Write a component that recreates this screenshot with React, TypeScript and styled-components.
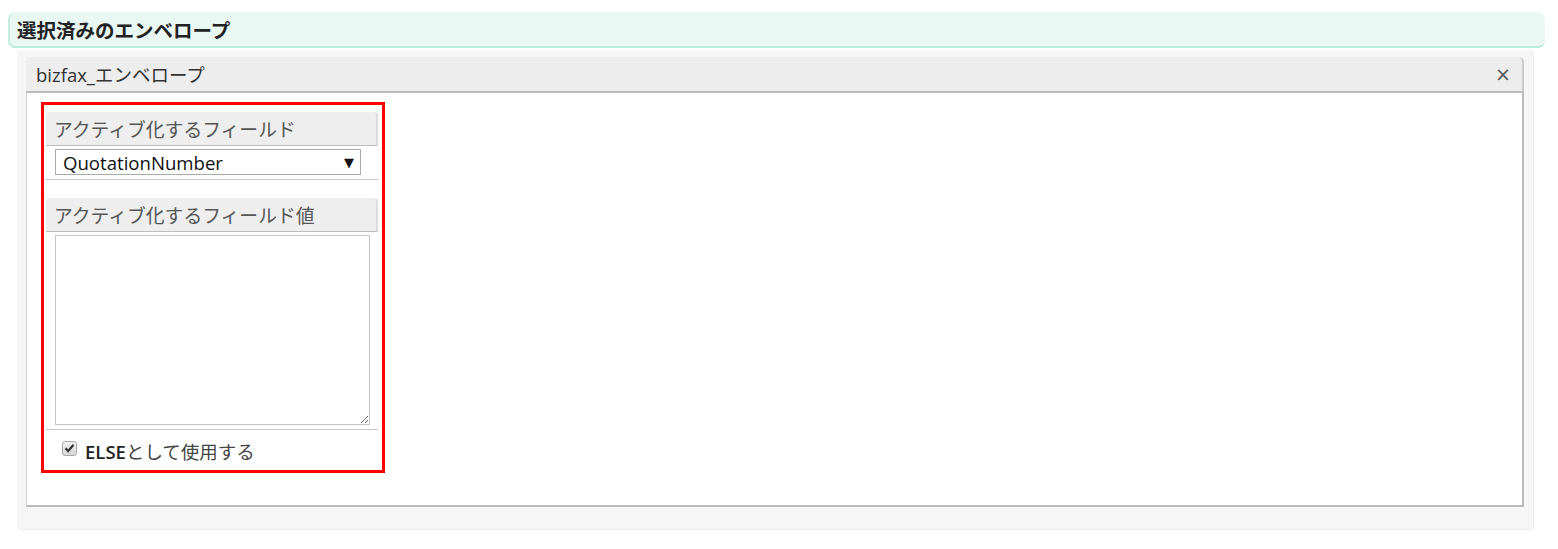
import styled, { createGlobalStyle } from 'styled-components';

const GlobalStyle = createGlobalStyle`
  html, body {
    margin: 0;
    padding: 0;
    background: #fff;
  }
  body {
    font-family: "Open Sans", "Noto Sans CJK JP", sans-serif;
    color: #333;
  }
`;

const Page = styled.div`
  width: 1558px;
  height: 549px;
  padding-top: 12px;
  box-sizing: border-box;
`;

const SectionHeader = styled.div`
  margin: 0 13px 0 8px;
  height: 36px;
  box-sizing: border-box;
  background: #e9f8f3;
  border-left: 2px solid #c4efdf;
  border-bottom: 2px solid #b9ecd9;
  border-radius: 7px;
  display: flex;
  align-items: center;
  padding-left: 7px;
  font-family: "Noto Sans CJK JP", sans-serif;
  font-weight: 700;
  font-size: 19.5px;
  color: #222;
`;

const OuterPanel = styled.div`
  margin: 2px 24px 0 17px;
  height: 480px;
  box-sizing: border-box;
  background: #f6f6f6;
  border-right: 1px solid #ececec;
  border-bottom: 1px solid #ececec;
  border-radius: 0 4px 4px 4px;
  padding: 7px 9px 0 9px;
`;

const Window = styled.div`
  display: flex;
  flex-direction: column;
  height: 450px;
`;

const TitleBar = styled.div`
  height: 36px;
  box-sizing: border-box;
  background: #ededed;
  border-right: 2px solid #c9c9c9;
  border-bottom: 2px solid #bbbbbb;
  border-radius: 4px 5px 0 0;
  display: flex;
  align-items: center;
  justify-content: space-between;
  padding: 0 10px 0 10px;
  font-family: "Open Sans", "Noto Sans CJK JP", sans-serif;
  font-size: 18.5px;
  color: #333;
`;

const CloseButton = styled.span`
  font-family: "DejaVu Sans", sans-serif;
  font-size: 19px;
  color: #555;
  line-height: 1;
  margin-right: 1px;
`;

const WindowBody = styled.div`
  flex: 1;
  background: #fff;
  border-left: 1px solid #cfcfcf;
  border-right: 2px solid #bbbbbb;
  border-bottom: 2px solid #bbbbbb;
  padding: 9px 0 0 14px;
`;

const Highlight = styled.div`
  width: 344px;
  height: 371px;
  box-sizing: border-box;
  border: 3px solid #ff0000;
  padding: 7px 4px 0 2px;
  display: flex;
  flex-direction: column;
`;

const FieldLabel = styled.div`
  height: 34px;
  box-sizing: border-box;
  background: #eeeeee;
  border-right: 2px solid #dddddd;
  border-bottom: 1px solid #bdbdbd;
  border-radius: 3px 4px 0 0;
  display: flex;
  align-items: center;
  padding-left: 8px;
  font-family: "Noto Sans CJK JP", sans-serif;
  font-size: 18.8px;
  color: #555;
`;

const FieldRow = styled.div<{ $last?: boolean }>`
  padding: 3px 0 4px 9px;
  border-bottom: ${({ $last }) => ($last ? 'none' : '1px solid #c8c8c8')};
`;

const Select = styled.div`
  width: 306px;
  height: 26px;
  box-sizing: border-box;
  border: 1px solid #aaaaaa;
  display: flex;
  align-items: center;
  justify-content: space-between;
  padding: 0 6px 0 7px;
  font-family: "Open Sans", sans-serif;
  font-size: 18.6px;
  color: #111;
`;

const Arrow = styled.span`
  font-family: "DejaVu Sans", sans-serif;
  font-size: 13px;
  color: #111;
`;

const Spacer = styled.div`
  height: 18px;
`;

const TextArea = styled.textarea`
  display: block;
  width: 315px;
  height: 190px;
  box-sizing: border-box;
  border: 1px solid #c4c4c4;
  margin: 0;
  resize: both;
  font-family: "Open Sans", sans-serif;
`;

const CheckRow = styled.label`
  display: flex;
  align-items: center;
  gap: 8px;
  padding: 8px 0 0 16px;
  font-family: "Noto Sans CJK JP", sans-serif;
  font-size: 18.5px;
  color: #444;
`;

const CheckBox = styled.span`
  width: 15px;
  height: 15px;
  box-sizing: border-box;
  border: 1px solid #a8a8a8;
  border-radius: 3px;
  background: linear-gradient(#f2f2f2, #d6d6d6);
  display: flex;
  align-items: center;
  justify-content: center;
  margin-top: -6px;
`;

const Strong = styled.span`
  font-family: "Open Sans", sans-serif;
  font-weight: 600;
  color: #222;
`;

export default function App() {
  return (
    <Page>
      <GlobalStyle />
      <SectionHeader>選択済みのエンベロープ</SectionHeader>
      <OuterPanel>
        <Window>
          <TitleBar>
            <span>bizfax_エンベロープ</span>
            <CloseButton>×</CloseButton>
          </TitleBar>
          <WindowBody>
            <Highlight>
              <FieldLabel>アクティブ化するフィールド</FieldLabel>
              <FieldRow>
                <Select>
                  <span>QuotationNumber</span>
                  <Arrow>▼</Arrow>
                </Select>
              </FieldRow>
              <Spacer />
              <FieldLabel>アクティブ化するフィールド値</FieldLabel>
              <FieldRow>
                <TextArea />
              </FieldRow>
              <CheckRow>
                <CheckBox>
                  <svg width="11" height="10" viewBox="0 0 11 10">
                    <path d="M1.5 5.2 L4.2 8 L9.5 1.8" fill="none" stroke="#333" strokeWidth="2.2" />
                  </svg>
                </CheckBox>
                <span>
                  <Strong>ELSE</Strong>として使用する
                </span>
              </CheckRow>
            </Highlight>
          </WindowBody>
        </Window>
      </OuterPanel>
    </Page>
  );
}
